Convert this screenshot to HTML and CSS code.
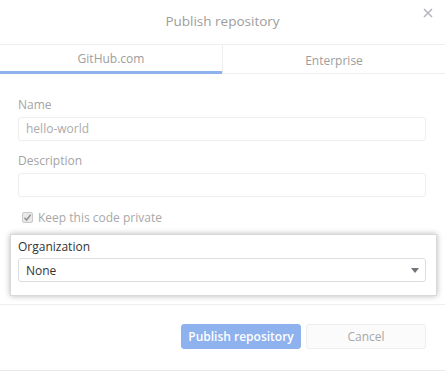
FILE: index.html
```html
<!DOCTYPE html>
<html lang="en">
<head>
  <meta charset="UTF-8" />
  <title>Publish repository</title>
  <link rel="stylesheet" href="styles.css">
</head>
<body>
  <div class="dialog">
    <div class="dialog-header">
      <h1>Publish repository</h1>
      <span class="close">
        <svg width="10" height="10" viewBox="0 0 10 10"><path d="M1 1L9 9M9 1L1 9" stroke="#b5b8bd" stroke-width="1.6" fill="none"/></svg>
      </span>
    </div>

    <div class="tabs">
      <div class="tab active">GitHub.com</div>
      <div class="tab">Enterprise</div>
    </div>

    <div class="form">
      <label class="field-label">Name</label>
      <div class="text-input">hello-world</div>

      <label class="field-label">Description</label>
      <div class="text-input"></div>

      <div class="check-row">
        <span class="checkbox">
          <svg width="9" height="9" viewBox="0 0 9 9"><path d="M1.5 4.8L3.6 7L7.6 1.8" stroke="#8f9296" stroke-width="1.6" fill="none"/></svg>
        </span>
        <span>Keep this code private</span>
      </div>
    </div>

    <div class="org-box">
      <label class="org-label">Organization</label>
      <div class="select">
        <span>None</span>
        <span class="arrow"></span>
      </div>
    </div>

    <div class="dialog-footer">
      <button class="btn primary">Publish repository</button>
      <button class="btn">Cancel</button>
    </div>
  </div>
</body>
</html>
```

FILE: styles.css
```css
* { box-sizing: border-box; margin: 0; padding: 0; }

body {
  font-family: 'Open Sans', 'Noto Sans', sans-serif;
  font-size: 12px;
  background: #fff;
  color: #333;
  width: 445px;
  height: 371px;
  overflow: hidden;
}

.dialog {
  width: 445px;
  height: 371px;
  border-bottom: 1px solid #e8e8e8;
}

.dialog-header {
  position: relative;
  height: 45px;
  border-bottom: 1px solid #eeeeee;
  display: flex;
  align-items: center;
  justify-content: center;
}

.dialog-header h1 {
  font-size: 13.5px;
  font-weight: 400;
  color: #9d9d9d;
  margin-top: -3px;
}

.close {
  position: absolute;
  right: 12px;
  top: 8px;
  display: flex;
}

.tabs {
  display: flex;
  height: 29px;
}

.tab {
  flex: 1;
  display: flex;
  align-items: center;
  justify-content: center;
  color: #9d9d9d;
  border-bottom: 1px solid #eeeeee;
  padding-top: 3px;
}

.tab + .tab { border-left: 1px solid #eeeeee; }

.tab.active {
  border-bottom: 3px solid #8db2ee;
  padding-top: 1px;
}

.form {
  padding: 23px 19px 0 18px;
}

.field-label {
  display: block;
  color: #a4a4a4;
  line-height: 16px;
  margin-bottom: 4px;
}

.text-input {
  height: 24px;
  border: 1px solid #eeeeee;
  border-radius: 3px;
  padding: 0 7px;
  line-height: 22px;
  color: #ababab;
  margin-bottom: 12px;
}

.check-row {
  display: flex;
  align-items: center;
  gap: 5px;
  color: #a8a8a8;
  margin-top: 1px;
  padding-left: 4px;
  height: 16px;
}

.checkbox {
  width: 11px;
  height: 11px;
  border: 1px solid #c9c9c9;
  border-radius: 2px;
  background: #e9e9e9;
  display: flex;
  align-items: center;
  justify-content: center;
}

.org-box {
  margin: 9px 8px 0 10px;
  height: 62px;
  border: 1px solid #d9d9d9;
  box-shadow: 0 0 6px rgba(0, 0, 0, 0.28);
  padding: 4px 10px 0 7px;
  background: #fff;
}

.org-label {
  display: block;
  color: #333;
  line-height: 16px;
  margin-bottom: 3px;
}

.select {
  height: 24px;
  border: 1px solid #dddddd;
  border-radius: 3px;
  display: flex;
  align-items: center;
  justify-content: space-between;
  padding: 0 6px 0 7px;
  color: #333;
}

.arrow {
  width: 0;
  height: 0;
  border-left: 4px solid transparent;
  border-right: 4px solid transparent;
  border-top: 5px solid #6f737a;
}

.dialog-footer {
  margin-top: 8px;
  border-top: 1px solid #eeeeee;
  display: flex;
  justify-content: flex-end;
  gap: 5px;
  padding: 19px 19px 0 0;
}

.btn {
  width: 120px;
  height: 25px;
  border-radius: 3px;
  font-family: inherit;
  font-size: 12px;
  border: 1px solid #eeeeee;
  background: #fbfbfb;
  color: #a8a8a8;
}

.btn.primary {
  background: #8db2ee;
  border-color: #8db2ee;
  color: #fff;
  font-weight: 600;
}
```
